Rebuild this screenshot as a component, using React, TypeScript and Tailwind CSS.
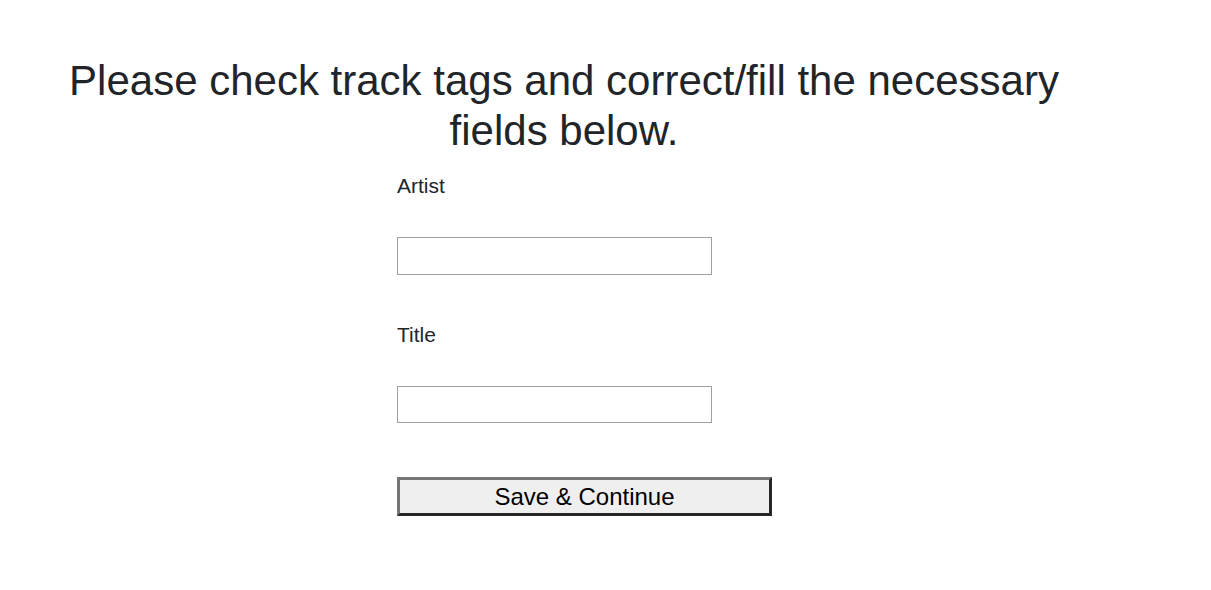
export default function App() {
  return (
    <div className="min-h-screen bg-white font-['Liberation_Sans',Arial,sans-serif] text-[#212529]">
      <div className="w-[1128px] px-10 pt-[56px]">
        <h1 className="text-center text-[42px] leading-[50px] font-normal">
          Please check track tags and correct/fill the necessary fields below.
        </h1>
        <form className="ml-[357px] mt-[15px] flex flex-col items-start">
          <label htmlFor="artist" className="text-[21px] leading-[30px]">
            Artist
          </label>
          <input
            id="artist"
            type="text"
            className="mt-[36px] h-[38px] w-[315px] border border-[#a0a0a0] bg-white px-2 outline-none"
          />
          <label htmlFor="title" className="mt-[45px] text-[21px] leading-[30px]">
            Title
          </label>
          <input
            id="title"
            type="text"
            className="mt-[36px] h-[37px] w-[315px] border border-[#a0a0a0] bg-white px-2 outline-none"
          />
          <button
            type="button"
            className="mt-[54px] h-[39px] w-[375px] border-[3px] border-t-[#767676] border-l-[#767676] border-r-[#272727] border-b-[#272727] bg-[#efefef] text-[24px] leading-none text-black"
          >
            Save &amp; Continue
          </button>
        </form>
      </div>
    </div>
  );
}
